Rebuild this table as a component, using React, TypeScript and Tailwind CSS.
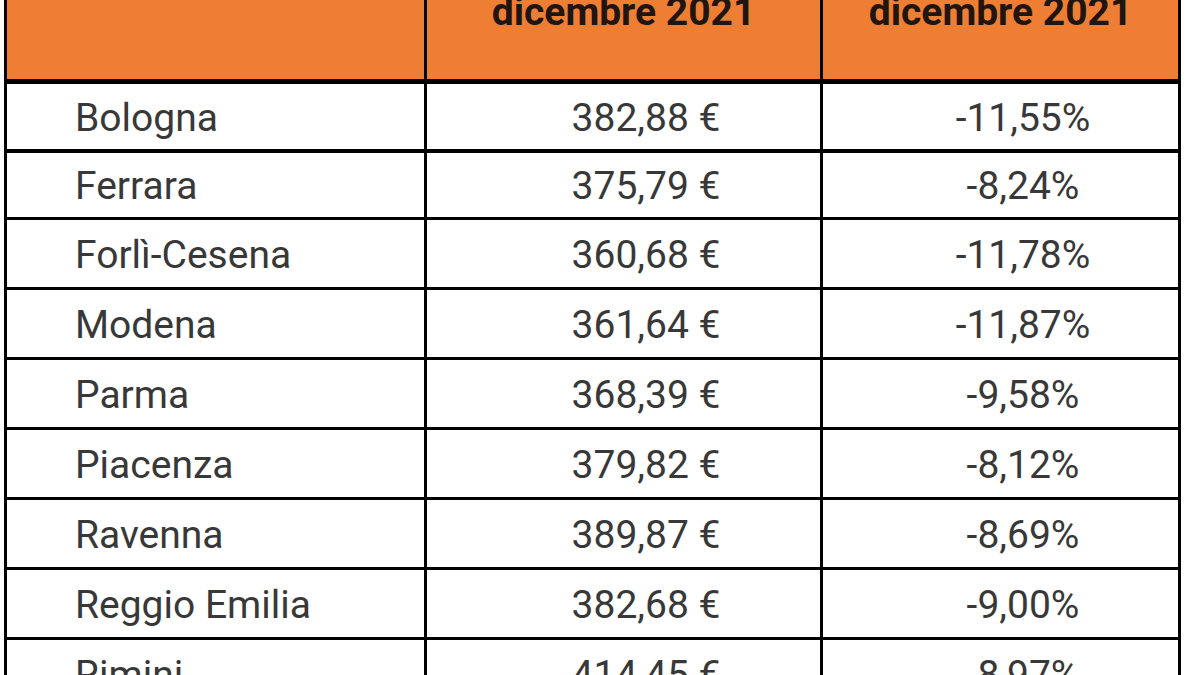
const rows = [
  { city: 'Bologna', price: '382,88 €', change: '-11,55%' },
  { city: 'Ferrara', price: '375,79 €', change: '-8,24%' },
  { city: 'Forlì-Cesena', price: '360,68 €', change: '-11,78%' },
  { city: 'Modena', price: '361,64 €', change: '-11,87%' },
  { city: 'Parma', price: '368,39 €', change: '-9,58%' },
  { city: 'Piacenza', price: '379,82 €', change: '-8,12%' },
  { city: 'Ravenna', price: '389,87 €', change: '-8,69%' },
  { city: 'Reggio Emilia', price: '382,68 €', change: '-9,00%' },
  { city: 'Rimini', price: '414,45 €', change: '-8,97%' },
];

// first two body rows are a bit shorter / heavier-lined than the rest
const rowClass = (i: number) => {
  if (i === 0) return 'h-[69px] border-b-[4px]';
  if (i === 1) return 'h-[67px] border-b-[3px]';
  return 'h-[70px] border-b-[3px]';
};

export default function App() {
  return (
    <div className="w-[1200px] h-[675px] overflow-hidden bg-white font-['Roboto',sans-serif]">
      <div className="ml-[4px] w-[1177px]">
        {/* header */}
        <div className="flex h-[84px] border-b-[5px] border-black bg-[#ee7e33]">
          <div className="w-[423px] border-x-[3px] border-black" />
          <div className="w-[396px] border-r-[3px] border-black overflow-hidden">
            <div className="-mt-[17px] text-center text-[39px] font-bold text-[#201510]">dicembre 2021</div>
          </div>
          <div className="w-[358px] border-r-[3px] border-black overflow-hidden">
            <div className="-mt-[17px] text-center text-[39px] font-bold text-[#201510]">dicembre 2021</div>
          </div>
        </div>

        {/* body */}
        {rows.map((r, i) => (
          <div key={r.city} className={`flex border-black ${rowClass(i)} text-[39px] text-[#383838]`}>
            <div className="w-[423px] border-x-[3px] border-black flex items-center pt-[3px] pl-[68px]">{r.city}</div>
            <div className="w-[396px] border-r-[3px] border-black flex items-center justify-center pt-[3px] pl-[45px]">{r.price}</div>
            <div className="w-[358px] border-r-[3px] border-black flex items-center justify-center pt-[3px] pl-[45px]">{r.change}</div>
          </div>
        ))}
      </div>
    </div>
  );
}
